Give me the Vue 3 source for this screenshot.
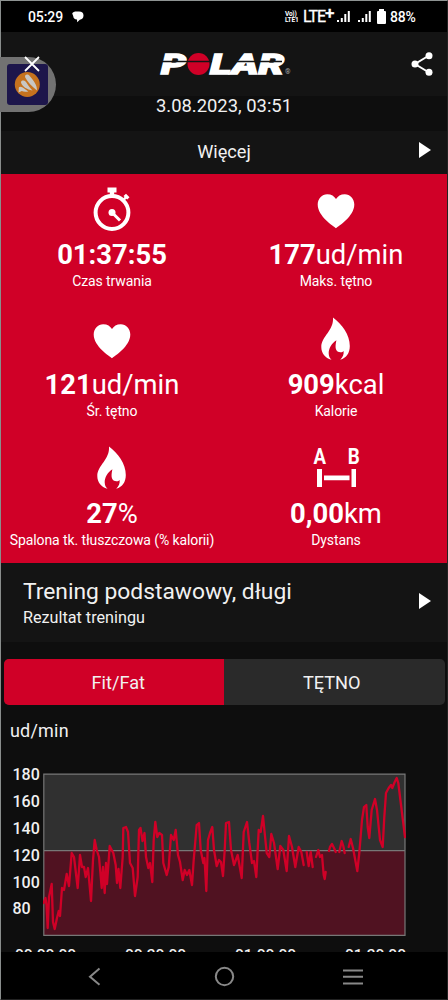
<script setup>
const stats = [
  { icon: 'timer', value: '01:37:55', unit: '', label: 'Czas trwania' },
  { icon: 'heart', value: '177', unit: 'ud/min', label: 'Maks. tętno' },
  { icon: 'heart', value: '121', unit: 'ud/min', label: 'Śr. tętno' },
  { icon: 'flame', value: '909', unit: 'kcal', label: 'Kalorie' },
  { icon: 'flame', value: '27', unit: '%', label: 'Spalona tk. tłuszczowa (% kalorii)' },
  { icon: 'distance', value: '0,00', unit: 'km', label: 'Dystans' },
]
const yLabels = [180, 160, 140, 120, 100, 80]
const xLabels = ['00:00:00', '00:30:00', '01:00:00', '01:30:00']

// Heart-rate samples; a new segment starts after each gap in the signal.
const segments = [
  '43.5,903 45.5,898 46.5,905 47.7,928 49,897 51.7,884 53,922 54.7,929 57,918 58.7,911 60,916 62,888 64,890 66.7,874 69,886 71.7,853 74,857 77.7,888 80,855 82,867 84,867 85.7,877 88,868 91,901 93,860 94.7,840 96.7,850 99,857 101.7,888 103,867 104.7,893 106,863 107,884 109.7,846 113.3,853 115.7,865 117,883 118.5,869 120.3,888 122.7,857 123.3,828 126,827 128,832 130,863 132.7,868 135,896 137.7,877 139,830 140.5,828 142.5,841 144.5,833 146,857 148.3,868 150,863 152.3,882 153.7,840 155.3,822 157.3,837 159.3,833 162,835 163.3,863 166.7,875 168.7,867 171,835 173.7,840 175.7,830 178,855 180,862 182.7,880 184.7,870 187,875 189.3,870 192,885 193.7,860 196.7,825 199,823 200.7,850 203.3,863 204.5,858 206.3,891 208,840 210,833 212.3,827 214,850 216.7,866 219,860 221,862 223,876 224.7,850 226,823 229,822 231,850 234,865 237.7,855 241.7,878 243.7,832 247,822 249.3,843 252,863 254,861 256.3,877 258.7,830 260.7,832 263,816 264.7,833 266.7,853 269.3,857 271.3,834 274,843 277.7,869 280.3,846 283.3,850 286.7,871 289,836 292,847 295.3,867 298.7,847 301.3,852 303.7,865',
  '306.7,852 308.7,866 310.7,852 312.7,867', '316,857 318.3,850 320,857 322,855 323.7,875 324.7,879 325.7,872',
  '329,851 330,847 332,844 334,848 335.7,852', '339.3,852 341.7,841 343.3,846 344.7,853',
  '348.7,847 350.7,839 353,848 357.3,871 359.3,853 362,820 364,807 366.3,805 367.7,827 369.3,838 371.7,810 375,799 377,810 380,840 382.7,847 384.3,817 386,793 388.7,788 391,785 392.3,788 394.7,782 396.7,778 398.3,783 405,837',
]
</script>

<template>
  <div class="phone">
    <div class="status">
      <span class="clock">05:29</span>
      <svg class="chat" width="12" height="12" viewBox="0 0 12 12"><path d="M4.5 .5H7C10 .5 11.5 2 11.5 4.6 11.5 7.5 10 8.2 7.8 8.8L5.2 11.2 5 8.5C2.5 8.4 1.4 7 1.2 5L.2 2.5C1 1 2.5 .5 4.5 .5Z" /></svg>
      <div class="volte"><span>Vo))</span><span>LTE1</span></div>
      <span class="lte">LTE<b>+</b></span>
      <svg v-for="n in 2" :key="n" class="signal" width="14" height="13" viewBox="0 0 14 13"><path d="M0 10h2v2H0zM3.800 8h2v4h-2zM7.300 4h2v8h-2zM10.800 1h2v11h-2z" /></svg>
      <svg class="battery" width="9" height="15" viewBox="0 0 9 15"><path d="M2 0h5v2h1q1 0 1 1v11q0 1-1 1H1q-1 0-1-1V3q0-1 1-1h1z" /></svg>
      <span class="percent">88%</span>
    </div>

    <header class="header">
      <svg class="close" width="16" height="16" viewBox="0 0 16 16"><path d="M1 1l14 14M15 1L1 15" /></svg>
      <svg class="logo" width="132" height="28" viewBox="0 0 132 28">
        <g class="wordmark">
          <text x="1" y="23.500" textLength="25" lengthAdjust="spacingAndGlyphs">P</text>
          <text x="50" y="23.500" textLength="74" lengthAdjust="spacingAndGlyphs">LAR</text>
        </g>
        <circle cx="38.500" cy="14" r="11" />
        <path class="slit" d="M0 11.500h52M70 11.500h52" />
        <text class="reg" x="125" y="23.500">®</text>
      </svg>
      <svg class="share" width="22" height="24" viewBox="0 0 22 24">
        <path d="M18 3.5L4 12l14 8.5" /><circle cx="18" cy="3.7" r="3.5" /><circle cx="4" cy="12" r="3.5" /><circle cx="18" cy="20.3" r="3.5" />
      </svg>
    </header>

    <div class="date">3.08.2023, 03:51</div>
    <div class="more"><span>Więcej</span><i class="arrow"></i></div>

    <section class="stats">
      <article v-for="s in stats" :key="s.label" class="stat">
        <svg class="icon" width="50" height="48" viewBox="0 0 50 48">
          <g v-if="s.icon === 'timer'">
            <circle class="line" cx="25" cy="29.5" r="16.4" />
            <path d="M20.500 4.500h9v5h-2.300v4h-4.400v-4h-2.300zM35.500 16l2-2-1-1 2.500-2.200 3.500 3.400-2.200 2.300-1-.8-2 2z" />
            <circle cx="25" cy="29.5" r="3.5" /><path class="hand" d="M25 29.5l8 8" />
          </g>
          <path v-else-if="s.icon === 'heart'" d="M25 45.3C22.5 43.3 6.7 33.5 6.7 21.6 6.7 15.5 11 11.2 16.2 11.2c4.2 0 7.1 2 8.8 4.9 1.7-2.9 4.6-4.9 8.8-4.9 5.2 0 9.500 4.3 9.500 10.4C43.3 33.5 27.5 43.3 25 45.3Z" />
          <path v-else-if="s.icon === 'flame'" d="M22 4.5C31 11.5 38.8 21.5 38.8 33 38.8 40 35.5 44.8 29.2 46.8 31.8 44.2 33 41.5 32.6 38 31.5 39.4 30 39.7 28.2 39 24.8 38.2 23.6 35 25.4 27.2 20.5 30 17.5 36 17.7 40.5 17.8 43.5 18.8 45.2 20.5 46.8 14 45 10.3 40 10.3 34 10.3 23.5 23 17.5 22 4.5Z" />
          <g v-else>
            <text x="2.500" y="22" textLength="12.500" lengthAdjust="spacingAndGlyphs">A</text>
            <text x="36.800" y="22" textLength="12" lengthAdjust="spacingAndGlyphs">B</text>
            <path d="M6 27h5v18H6zM40.500 27H45v18h-4.500zM13 33.500h25.500v4.800H13z" />
          </g>
        </svg>
        <div class="value"><b>{{ s.value }}</b>{{ s.unit }}</div>
        <div class="label">{{ s.label }}</div>
      </article>
    </section>

    <section class="result">
      <div><h2>Trening podstawowy, długi</h2><p>Rezultat treningu</p></div>
      <i class="arrow"></i>
    </section>

    <div class="tabs"><div class="tab active">Fit/Fat</div><div class="tab">TĘTNO</div></div>

    <div class="axis-title">ud/min</div>
    <section class="chart">
      <div class="y-axis"><span v-for="y in yLabels" :key="y">{{ y }}</span></div>
      <svg width="363" height="163" viewBox="43 773 363 163">
        <rect class="upper" x="44" y="774" width="361" height="77" />
        <rect class="lower" x="44" y="851" width="361" height="84" />
        <path class="frame" d="M43.800 774.200H405V935.300H43.800ZM44 850.700H405" />
        <polyline v-for="p in segments" :key="p" :points="p" />
      </svg>
    </section>
    <div class="x-axis"><span v-for="x in xLabels" :key="x">{{ x }}</span></div>

    <nav class="nav">
      <svg width="448" height="48" viewBox="0 0 448 48">
        <path d="M99.500 16.500L90 24.800l9.500 8" /><circle cx="224.500" cy="24.500" r="8.700" />
        <path d="M343 18.500h20M343 24.800h20M343 31.500h20" />
      </svg>
    </nav>

    <div class="bubble">
      <svg width="41" height="41" viewBox="0 0 41 41">
        <rect width="41" height="41" rx="3" /><circle cx="20.300" cy="20.500" r="12.500" />
        <path d="M18.200 13.500c-1-3 2.500-4 4.500-1.500 4 5 7.500 9 7.300 14.500C24.500 22 21 18.500 18.200 13.500ZM14 18.500c0-2.500 3-2.500 5-.5 2 3 4 6 6.500 8.500C20 25.500 15 22.500 14 18.500ZM11.800 25c-.5-2.500 1.500-3 4-1.500l5.500 4c-3 .6-5 .2-6.500-.5l-3.300 1.500Z" />
      </svg>
    </div>
  </div>
</template>

<style>
body { background: #0e0e0e; }
</style>

<style scoped>
.phone { position: relative; box-sizing: border-box; width: 448px; height: 1000px; overflow: hidden; background: #0e0e0e; color: #f1f1f1; font-family: Roboto, "Noto Sans", sans-serif; }
.phone::after { content: ""; position: absolute; inset: 0; border-left: 1px solid #898d8c; border-top: 1px solid #8e9392; border-right: 1px solid #222; border-bottom: 1px solid #222; pointer-events: none; }
svg { display: block; flex: none; }
.status { display: flex; height: 32px; background: #000; align-items: center; padding: 1px 0 0 28px; box-sizing: border-box; color: #fff; fill: #fff; }
.clock { font-size: 14px; font-weight: 500; line-height: 16px; width: 35px; letter-spacing: -.1px; }
.chat { margin-left: 9px; }
.volte { display: flex; flex-direction: column; width: 15px; margin-left: 201px; font-size: 6.5px; line-height: 6px; font-weight: 700; letter-spacing: -.2px; }
.lte { width: 33px; margin-left: 3px; font-size: 16px; line-height: 18px; letter-spacing: -1px; white-space: nowrap; -webkit-text-stroke: .3px #fff; }
.lte b { font-size: 17px; line-height: 1px; position: relative; top: -3px; font-weight: 500; }
.signal { margin-left: 1px; margin-right: 6px; }
.signal + .battery { margin-left: -1px; }
.percent { margin-left: 4px; font-size: 14px; font-weight: 500; letter-spacing: -.2px; }
.header { height: 64px; background: #141414; display: flex; align-items: center; padding: 0 15px 0 24px; }
.close { stroke: #fff; stroke-width: 1.800; fill: none; position: relative; z-index: 2; }
.logo { margin-left: 120px; overflow: visible; }
.wordmark { font: italic 900 27px Roboto, sans-serif; fill: #fff; stroke: #fff; stroke-width: 1.300; }
.logo circle { fill: #d00027; }
.slit { stroke: #141414; stroke-width: 1.300; }
.reg { font: 7px Roboto, sans-serif; fill: #aaa; }
.share { margin-left: auto; fill: #fff; }
.share path { fill: none; stroke: #fff; stroke-width: 2; }
.date { height: 35px; line-height: 20px; text-align: center; font-size: 18.400px; }
.more { height: 43px; background: #141414; position: relative; display: grid; grid-template-columns: 1fr 12px; align-items: center; padding: 0 17px 0 0; box-sizing: border-box; }
.more span { font-size: 18.200px; text-align: center; padding-left: 29px; line-height: 22px; margin-top: -2px; }
.arrow { width: 0; height: 0; border-left: 12px solid #fff; border-top: 8.500px solid transparent; border-bottom: 8.500px solid transparent; }
.more .arrow { margin-top: -5px; }
.stats { background: #d00027; height: 389px; display: grid; grid-template-columns: 1fr 1fr; grid-auto-rows: 129.500px; color: #fff; }
.stat { text-align: center; padding-top: 9px; }
.icon { margin: 0 auto; fill: #fff; }
.line { fill: none; stroke: #fff; stroke-width: 4; }
.hand { stroke: #fff; stroke-width: 3; }
.icon text { font: 700 22px Roboto, sans-serif; }
.value { font-size: 27.400px; line-height: 32px; margin-top: 8px; font-weight: 400; }
.label { font-size: 14px; letter-spacing: -.1px; line-height: 18px; margin-top: 1px; white-space: nowrap; }
.result { height: 79px; box-sizing: border-box; background: #141414; display: flex; justify-content: space-between; padding: 15px 17px 0 23px; }
h2 { margin: 0; font-size: 22.800px; font-weight: 400; line-height: 27px; }
p { margin: 0; font-size: 16.200px; line-height: 25px; }
.result .arrow { margin-top: 15px; }
.tabs { display: flex; width: 441px; height: 46px; margin: 17px 0 0 4px; overflow: hidden; border-radius: 5px; background: #2a2a2a; }
.tab { width: 221.500px; box-sizing: border-box; line-height: 48px; text-align: center; font-size: 18.200px; padding-right: 5px; }
.active { width: 219.500px; padding: 0 0 0 9px; background: #d00027; }
.axis-title { height: 68px; padding-left: 10px; line-height: 52px; font-size: 18px; letter-spacing: .2px; box-sizing: border-box; }
.chart { display: flex; height: 163px; }
.y-axis { width: 43px; padding-left: 12.500px; box-sizing: border-box; display: flex; flex-direction: column; font-size: 16px; font-weight: 500; line-height: 27px; margin-top: -12px; }
.y-axis span { height: 26.900px; }
.upper { fill: #303030; }
.lower { fill: #501221; }
.frame { fill: none; stroke: #777; stroke-width: 1.200; }
polyline { fill: none; stroke: #d00027; stroke-width: 2.300; stroke-linejoin: round; stroke-linecap: round; }
.x-axis { display: flex; justify-content: space-between; height: 16px; margin: 0 42px 0 15px; overflow: hidden; font-size: 15.500px; line-height: 38px; font-weight: 500; }
.nav { height: 48px; background: #000; fill: none; stroke: #888; stroke-width: 2; }
.bubble { position: absolute; left: 0; top: 57px; width: 56px; height: 55px; padding: 7px; box-sizing: border-box; border-radius: 0 28px 28px 0; background: #727272; z-index: 1; }
.bubble rect { fill: #1d164b; }
.bubble circle { fill: #c6721e; }
.bubble path { fill: #c9c7c4; }
</style>
